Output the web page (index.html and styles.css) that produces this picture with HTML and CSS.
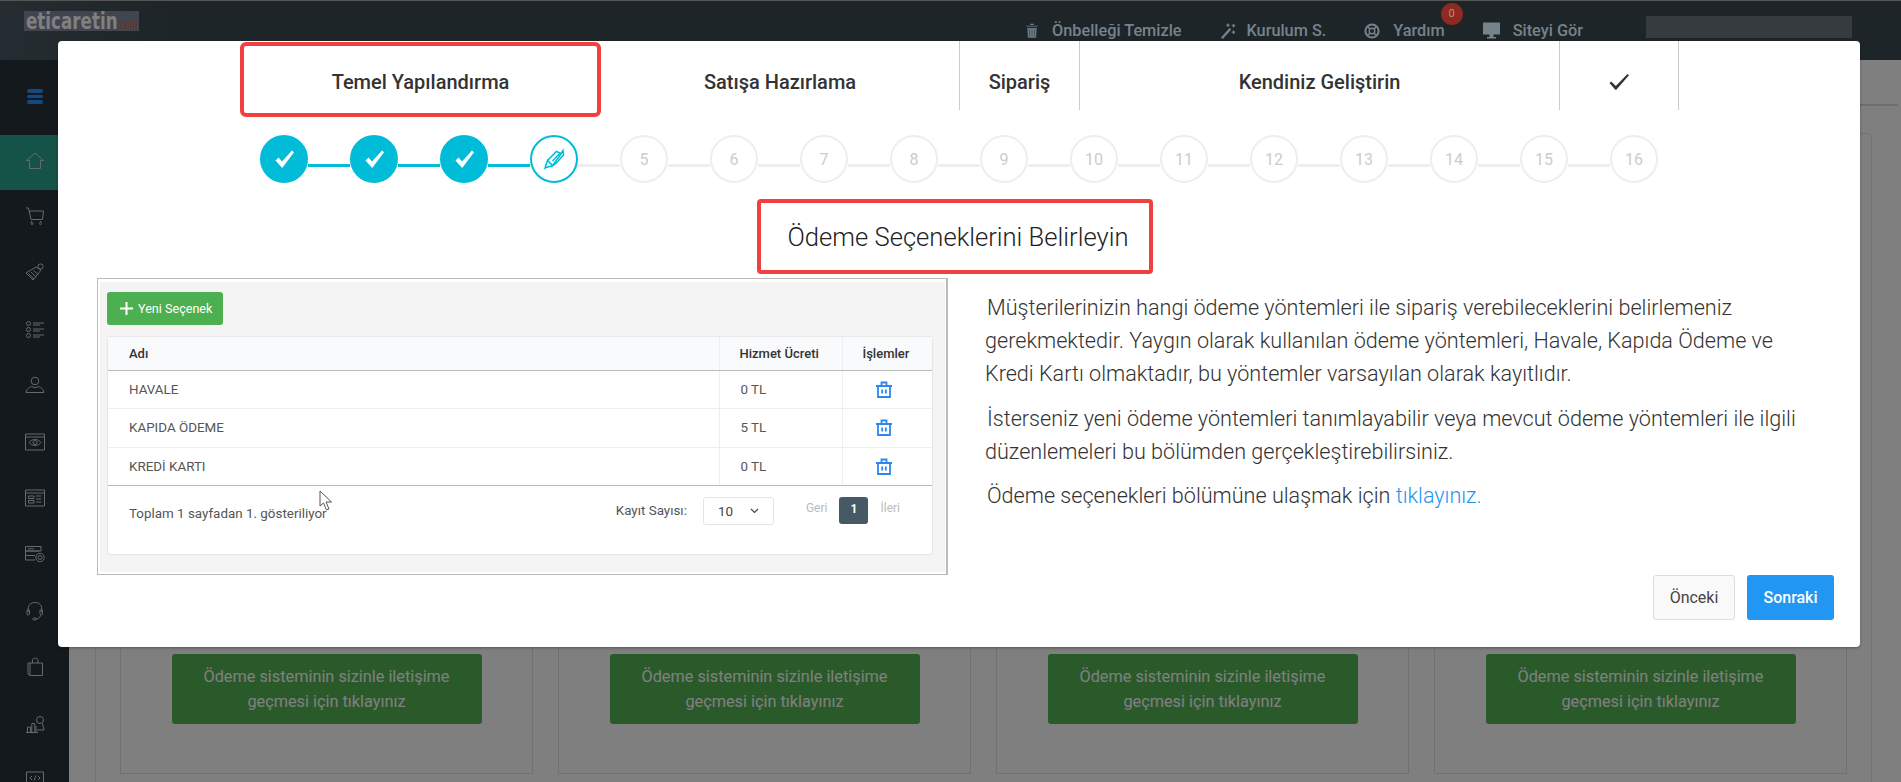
FILE: index.html
```html
<!DOCTYPE html>
<html lang="tr">
<head>
<meta charset="utf-8">
<title>Ödeme Seçeneklerini Belirleyin</title>
<link rel="stylesheet" href="styles.css">
</head>
<body>
<svg class="defs" width="0" height="0" aria-hidden="true">
  <symbol id="check" viewBox="0 0 24 24"><path d="M3.5 13.5 L6.6 10.6 L10 14.6 L20 3.4 L22 5.2 L10.2 21 Z" fill="#fff"/></symbol>
  <symbol id="bin" viewBox="0 0 16 17"><path d="M0 5H16M2 5V16H14V5M5.500 5V1.500H10.500V5M6.200 8.500V12.500M9.800 8.500V12.500" fill="none" stroke="#2b88ee" stroke-width="1.800"/></symbol>
</svg>
<div class="app">
  <header class="topbar">
    <div class="logo"><span class="logo-text">eticaretin<span class="logo-com">.com</span></span></div>
    <nav class="topnav">
      <a class="topitem gap14"><svg width="12" height="15" viewBox="0 0 12 15"><path d="M0 2.500H12V3.800H0ZM4 2.500V.5H8V2.500ZM1 4.800H11L10.200 15H1.800ZM3.600 6.500V13.500M6 6.500V13.500M8.400 6.500V13.500" fill="#6d8089" stroke="#1e2529" stroke-width=".5"/></svg>Önbelleği Temizle</a>
      <a class="topitem gap11"><svg width="16" height="16" viewBox="0 0 16 16"><path d="M1 14.500L9.500 5L11.300 6.600L2.800 16Z" fill="#75838c"/><path d="M8 .5V4M6.300 2.200H9.700M13.500 1V4.500M11.800 2.700H15.200M13.500 7.500V11M11.800 9.200H15.200" stroke="#75838c" stroke-width="1.200"/></svg>Kurulum S.</a>
      <a class="topitem gap13"><svg width="16" height="16" viewBox="0 0 16 16"><circle cx="8" cy="8" r="6.600" fill="none" stroke="#75838c" stroke-width="2"/><circle cx="8" cy="8" r="2.800" fill="none" stroke="#75838c" stroke-width="1.400"/><path d="M3.500 3.500L6 6M12.500 3.500L10 6M3.500 12.500L6 10M12.500 12.500L10 10" stroke="#75838c" stroke-width="1.600"/></svg>Yardım<span class="badge">0</span></a>
      <a class="topitem gap13"><svg width="17" height="17" viewBox="0 0 17 17"><path d="M0 .5H17V12.500H0ZM6.500 12.500H10.500V15H13V16.500H4V15H6.500Z" fill="#75838c"/></svg>Siteyi Gör</a>
      <div class="userblur"></div>
    </nav>
  </header>
  <aside class="sidebar">
    <div class="menu-toggle"><span class="bars"><i></i><i></i><i></i></span></div>
    <a class="side-item active"><svg class="sico" viewBox="0 0 20 20"><path d="M1.500 9.500L10 2L18.500 9.500H15.500V17.500H4.500V9.500Z"/></svg></a>
    <a class="side-item"><svg class="sico" viewBox="0 0 20 20"><path d="M1 2H3.500L6 13.500H17.500L18.500 5H4M6.500 15V16.500M15.500 15V16.500"/><circle cx="7" cy="17.500" r="1"/><circle cx="15.500" cy="17.500" r="1"/></svg></a>
    <a class="side-item"><svg class="sico" viewBox="0 0 20 20"><path d="M1 11L11 5L16 8L8 18ZM3.500 11.500L9 17M6 10L11.500 15.500M8.500 8.500L13.500 13"/><circle cx="15.500" cy="4.500" r="2.600"/></svg></a>
    <a class="side-item"><svg class="sico" viewBox="0 0 20 20"><path d="M8 4H19M8 6H15M8 10H19M8 12H15M8 16H19M8 18H15"/><circle cx="3.500" cy="4.500" r="2"/><circle cx="3.500" cy="10.500" r="2"/><circle cx="3.500" cy="16.500" r="2"/></svg></a>
    <a class="side-item"><svg class="sico" viewBox="0 0 20 20"><circle cx="10" cy="6" r="3.800"/><path d="M1 17.500C2 13 5 12 7 11.500C8 13 12 13 13 11.500C15 12 18 13 19 17.500Z"/></svg></a>
    <a class="side-item"><svg class="sico" viewBox="0 0 20 20"><path d="M.5 2H19.500V18H.5ZM.5 5H19.500M4 10.500C7 6.500 13 6.500 16 10.500C13 14.500 7 14.500 4 10.500Z"/><circle cx="10" cy="10.500" r="2"/></svg></a>
    <a class="side-item"><svg class="sico" viewBox="0 0 20 20"><path d="M.5 2H19.500V18H.5ZM.5 5H19.500M3.500 8H9V10.500H3.500ZM3.500 12.500H9V15H3.500ZM11 8H16.500M11 11H16.500M11 14H16.500"/></svg></a>
    <a class="side-item"><svg class="sico" viewBox="0 0 20 20"><path d="M.5 2.500H16V7H.5ZM.5 7H14M.5 7V11.500H10M.5 11.500V16H10M3 4.800H9"/><circle cx="15" cy="13.500" r="4.200"/><circle cx="15" cy="13.500" r="2"/></svg></a>
    <a class="side-item"><svg class="sico" viewBox="0 0 20 20"><path d="M3.500 11C2 4 6 1.500 10 1.500S18 4 16.500 11M15.500 14.500C15 17 13 18 10.500 18"/><rect x="2" y="8.500" width="2.500" height="5.500" rx="1.200"/><rect x="15" y="8.500" width="2.500" height="5.500" rx="1.200"/><ellipse cx="9.500" cy="18" rx="1.700" ry="1.100"/></svg></a>
    <a class="side-item"><svg class="sico" viewBox="0 0 20 20"><path d="M3 6H17.500V18.500H5L3 17ZM5 6V18.500M7.500 6V3C7.500 .5 13 .5 13 3V6"/></svg></a>
    <a class="side-item"><svg class="sico" viewBox="0 0 20 20"><path d="M1 18.500H13M2.500 18.500V13H5.500V18.500M6.800 18.500V9.500H9.800V18.500M11 18.500V12M17.500 9.500L19 16H12"/><circle cx="15" cy="6" r="3.500"/></svg></a>
    <a class="side-item"><svg class="sico" viewBox="0 0 20 20"><path d="M1.500 2H18.500V14H1.500ZM.5 14H19.500V16.500H.5ZM7 6L5 8L7 10M13 6L15 8L13 10M11 5.500L9 10.500"/></svg></a>
  </aside>
  <main class="main">
    <div class="subbar"></div>
    <section class="panel">
      <div class="notice-card"><a class="notice-btn">Ödeme sisteminin sizinle iletişime<br>geçmesi için tıklayınız</a></div>
      <div class="notice-card"><a class="notice-btn">Ödeme sisteminin sizinle iletişime<br>geçmesi için tıklayınız</a></div>
      <div class="notice-card"><a class="notice-btn">Ödeme sisteminin sizinle iletişime<br>geçmesi için tıklayınız</a></div>
      <div class="notice-card"><a class="notice-btn">Ödeme sisteminin sizinle iletişime<br>geçmesi için tıklayınız</a></div>
    </section>
    <div class="backdrop"></div>
  </main>
</div>

<div class="modal">
  <div class="tabs">
    <div class="tab tab-hl w-1">Temel Yapılandırma</div>
    <div class="tab w-2">Satışa Hazırlama</div>
    <div class="tab w-3">Sipariş</div>
    <div class="tab w-4">Kendiniz Geliştirin</div>
    <div class="tab w-5"><svg width="22" height="16" viewBox="0 0 22 16"><path d="M1.500 9L3.200 7.400L7.800 12L19.500 0L21 1.300L8.300 15.800H7.300Z" fill="#333"/></svg></div>
  </div>

  <div class="steps">
    <div class="step done"><svg width="24" height="24"><use href="#check"/></svg></div><span class="conn on"></span>
    <div class="step done"><svg width="24" height="24"><use href="#check"/></svg></div><span class="conn on"></span>
    <div class="step done"><svg width="24" height="24"><use href="#check"/></svg></div><span class="conn on"></span>
    <div class="step current"><svg width="22" height="22" viewBox="0 0 22 22"><path d="M2 20L4.500 12.500L13.500 3.500L17 5L9.500 13M11 15.500L17 7.500L20 2.500L20.500 7L13 15.500L10 17.500ZM2 20L4.500 12.500L9.500 17.500Z" fill="none" stroke="#00bcd9" stroke-width="1.500"/></svg></div><span class="conn"></span>
    <div class="step">5</div><span class="conn"></span>
    <div class="step">6</div><span class="conn"></span>
    <div class="step">7</div><span class="conn"></span>
    <div class="step">8</div><span class="conn"></span>
    <div class="step">9</div><span class="conn"></span>
    <div class="step">10</div><span class="conn"></span>
    <div class="step">11</div><span class="conn"></span>
    <div class="step">12</div><span class="conn"></span>
    <div class="step">13</div><span class="conn"></span>
    <div class="step">14</div><span class="conn"></span>
    <div class="step">15</div><span class="conn"></span>
    <div class="step">16</div>
  </div>

  <h2 class="title">Ödeme Seçeneklerini Belirleyin</h2>

  <div class="content">
    <div class="shot">
      <div class="shot-inner">
        <a class="new-btn"><svg width="13" height="13" viewBox="0 0 13 13"><path d="M6.500 0V13M0 6.500H13" stroke="#fff" stroke-width="2"/></svg>Yeni Seçenek</a>
        <div class="shot-card">
          <table class="grid">
            <thead><tr><th class="c1">Adı</th><th class="c2">Hizmet Ücreti</th><th class="c3">İşlemler</th></tr></thead>
            <tbody>
              <tr><td>HAVALE</td><td>0 TL</td><td class="act"><svg width="16" height="17"><use href="#bin"/></svg></td></tr>
              <tr><td>KAPIDA ÖDEME</td><td>5 TL</td><td class="act"><svg width="16" height="17"><use href="#bin"/></svg></td></tr>
              <tr><td>KREDİ KARTI</td><td>0 TL</td><td class="act"><svg width="16" height="17"><use href="#bin"/></svg></td></tr>
            </tbody>
          </table>
          <div class="grid-foot">
            <span class="pageinfo">Toplam 1 sayfadan 1. gösteriliyor</span>
            <span class="count-label">Kayıt Sayısı:</span>
            <span class="count-select">10<svg width="9" height="6" viewBox="0 0 9 6"><path d="M1 1L4.500 4.500L8 1" fill="none" stroke="#444" stroke-width="1.200"/></svg></span>
            <span class="pg">Geri</span>
            <span class="pg-now">1</span>
            <span class="pg">İleri</span>
          </div>
          <svg class="cursor" width="14" height="21" viewBox="0 0 14 21"><path d="M1 1V16L4.500 13L7.500 20L10 19L7 12H12.500Z" fill="#fff" stroke="#555"/></svg>
        </div>
      </div>
    </div>
    <div class="copy">
      <p>Müşterilerinizin hangi ödeme yöntemleri ile sipariş verebileceklerini belirlemeniz gerekmektedir. Yaygın olarak kullanılan ödeme yöntemleri, Havale, Kapıda Ödeme ve Kredi Kartı olmaktadır, bu yöntemler varsayılan olarak kayıtlıdır.</p>
      <p>İsterseniz yeni ödeme yöntemleri tanımlayabilir veya mevcut ödeme yöntemleri ile ilgili düzenlemeleri bu bölümden gerçekleştirebilirsiniz.</p>
      <p>Ödeme seçenekleri bölümüne ulaşmak için <a class="link">tıklayınız.</a></p>
    </div>
  </div>

  <div class="actions">
    <a class="btn btn-prev">Önceki</a>
    <a class="btn btn-next">Sonraki</a>
  </div>
</div>
</body>
</html>
```
FILE: styles.css
```css
* { box-sizing: border-box; }
html, body { margin: 0; height: 100%; overflow: hidden; }
body { font-family: Roboto, "Liberation Sans", sans-serif; color: #333; background: #fff; position: relative; }
.defs { position: absolute; }

.app { display: grid; grid-template-columns: 69px 1fr; grid-template-rows: 60px 1fr; height: 782px; }

/* top bar */
.topbar { grid-column: 1 / 3; display: flex; align-items: center; justify-content: space-between; background: linear-gradient(90deg, #262d32 0, #1e2529 170px); border-top: 1px solid #555; padding: 0 49px 0 24px; }
.logo { width: 115px; height: 20px; margin-bottom: 20px; padding-left: 2px; background: #404550; color: #808080; font-family: "DejaVu Sans", sans-serif; font-stretch: condensed; font-weight: 700; font-size: 20px; line-height: 20px; white-space: nowrap; }
.logo-text { display: inline-block; transform: scale(.93, 1.15); transform-origin: left center; }
.logo-com { font-size: 10px; font-weight: 400; color: #7a2f20; }
.topnav { display: flex; align-items: center; gap: 38px; color: #75838c; font-size: 16.300px; font-weight: 500; }
.topitem { position: relative; display: flex; align-items: center; }
.gap14 { gap: 14px; }
.gap11 { gap: 11px; }
.gap13 { gap: 13px; }
.badge { position: absolute; right: -18px; top: -18px; width: 22px; height: 22px; border-radius: 50%; background: #8e2a22; color: #c98a84; font-size: 11px; line-height: 22px; text-align: center; font-weight: 400; }
.userblur { width: 206px; height: 22px; margin: 0 0 8px 25px; background: #353b3f; }

/* sidebar */
.sidebar { background: #14191e; display: flex; flex-direction: column; overflow: hidden; }
.menu-toggle { flex: 0 0 75px; display: flex; justify-content: center; }
.bars { display: flex; flex-direction: column; gap: 2px; width: 16px; margin-top: 29px; }
.bars i { display: block; height: 3.500px; border-radius: 2px; background: #114a84; }
.side-item { flex: 0 0 56.400px; display: flex; justify-content: center; padding-top: 16px; }
.side-item.active { background: #155248; flex-basis: 55px; }
.sico { width: 20px; height: 20px; fill: none; stroke: #666a6c; stroke-width: 1; }

/* dimmed page */
.main { position: relative; overflow: hidden; }
.backdrop { position: absolute; inset: 0; background: rgba(0, 0, 0, .5); }
.subbar { height: 46px; margin-right: 3px; background: #fff; border-bottom: 2px solid #dcdcdc; }
.panel { display: flex; gap: 25px; margin: 27px 29px 0 26px; padding: 24px 24px 0; border: 1px solid #e6e6e6; border-radius: 4px; height: 700px; }
.notice-card { flex: 0 0 413px; height: 616px; border: 1px solid #e2e2e2; display: flex; flex-direction: column; justify-content: flex-end; align-items: center; padding-bottom: 49px; }
.notice-btn { width: 310px; height: 70px; display: block; padding-top: 10px; background: #54b454; border-radius: 3px; color: #fff; font-size: 16.300px; line-height: 25px; text-align: center; }

/* modal */
.modal { position: absolute; left: 58px; top: 41px; width: 1802px; height: 606px; background: #fff; border-radius: 4px; box-shadow: 0 1px 3px rgba(0, 0, 0, .3); display: flex; flex-direction: column; z-index: 5; }

.tabs { display: flex; align-items: flex-start; padding-left: 182px; height: 76px; font-size: 20px; font-weight: 500; color: #333; }
.tab { height: 69px; display: flex; align-items: center; justify-content: center; border-right: 1px solid #ccc; padding-top: 12px; white-space: nowrap; }
.tab-hl { height: 75px; margin-top: 1px; border: 4px solid #f04040; border-radius: 6px; padding-top: 5px; }
.w-1 { width: 361px; }
.w-2 { width: 359px; }
.w-3 { width: 120px; }
.w-4 { width: 480px; }
.w-5 { width: 119px; }

.steps { display: flex; align-items: flex-start; padding-left: 202px; margin-top: 18px; }
.step { flex: 0 0 48px; height: 48px; border-radius: 50%; border: 2px solid #eee; display: flex; align-items: center; justify-content: center; color: #ccc; font-size: 16px; background: #fff; }
.step.done { background: #00bcd9; border-color: #00bcd9; }
.step.current { border-color: #00bcd9; }
.conn { flex: 0 0 42px; height: 3px; margin-top: 29px; background: #eee; }
.conn.on { background: #00bcd9; }

.title { align-self: flex-start; width: 396px; height: 75px; margin: 16px 0 0 699px; padding-left: 6px; border: 4px solid #f04040; border-radius: 4px; display: flex; align-items: center; justify-content: center; font-size: 25.600px; font-weight: 300; color: #222; white-space: nowrap; }

.content { display: flex; height: 297px; margin-top: 4px; padding-left: 39px; }
.shot { flex: 0 0 851px; border: 1px solid #bbb; border-right-width: 2px; padding: 3px 1px 2px 2px; }
.shot-inner { height: 100%; background: #f4f4f4; padding: 10px 13px 0 7px; }
.new-btn { display: flex; align-items: center; gap: 5px; width: 116px; height: 33px; padding-left: 13px; background: #4caf50; border-radius: 3px; color: #fff; font-size: 12.600px; }
.shot-card { position: relative; margin: 12px 0 0 1px; height: 217px; background: #fff; border-radius: 3px; box-shadow: 0 0 2px rgba(0, 0, 0, .2); font-size: 13.400px; color: #555; }
.grid { width: 100%; border-collapse: collapse; table-layout: fixed; }
.grid th { height: 33px; padding: 0 0 0 21px; text-align: left; font-weight: 500; font-size: 13px; color: #333; background: #f9fafb; border-bottom: 1px solid #bbb; }
.grid td { height: 38.500px; padding: 0 0 0 21px; border-bottom: 1px solid #eee; }
.grid tr:last-child td { border-bottom-color: #bbb; }
.grid th + th, .grid td + td { border-left: 1px solid #eee; }
.grid th + th { padding-left: 20px; }
.grid td.act { padding-left: 33px; }
.grid td.act svg { display: block; }
.c1 { width: 611px; }
.c2 { width: 123px; }
.c3 { width: 90px; }
.grid-foot { display: flex; align-items: flex-start; padding: 11px 32px 0 21px; }
.pageinfo { margin-right: auto; padding-top: 9px; }
.count-label { padding-top: 6px; margin-right: 16px; }
.count-select { width: 71px; height: 28px; display: flex; align-items: center; justify-content: space-between; padding: 0 14px; border: 1px solid #e4e4e4; border-radius: 3px; margin-right: 32px; color: #444; }
.pg { font-size: 12px; color: #bbb; padding-top: 4px; }
.pg-now { width: 29px; height: 27px; margin: 0 12px; background: #455a64; border-radius: 3px; color: #fff; font-size: 12px; font-weight: 700; line-height: 25px; text-align: center; }
.cursor { position: absolute; left: 211px; top: 153px; }

.copy { flex: 0 0 820px; margin-left: 37px; padding-top: 13px; font-size: 21.600px; font-weight: 300; line-height: 33px; color: #333; }
.copy p { margin: 0 0 11.500px; text-indent: 2px; }
.link { color: #2196f3; }

.actions { display: flex; justify-content: flex-end; gap: 12px; padding-right: 26px; }
.btn { height: 45px; display: flex; align-items: center; justify-content: center; border-radius: 3px; font-size: 16px; }
.btn-prev { width: 82px; background: #fafafa; border: 1px solid #ddd; color: #444; }
.btn-next { width: 87px; background: #2196f3; color: #fff; font-weight: 500; }
```
